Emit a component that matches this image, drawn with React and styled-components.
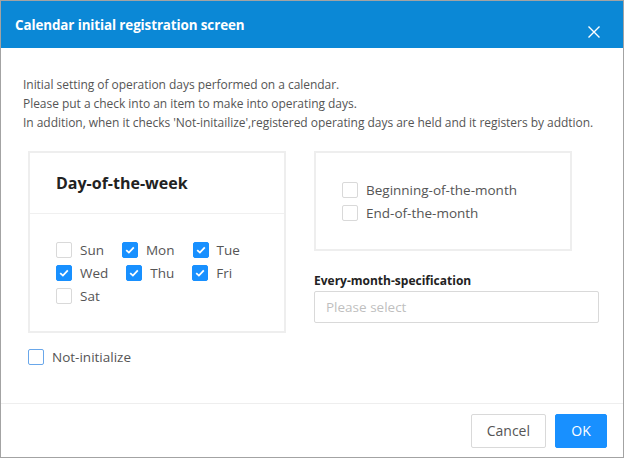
import React from 'react'
import styled, { createGlobalStyle } from 'styled-components'

const GlobalStyle = createGlobalStyle`
  html, body {
    margin: 0;
    padding: 0;
    background: #fff;
  }
  body {
    font-family: "Open Sans", "Noto Sans", sans-serif;
    color: #333;
  }
`

const Dialog = styled.div`
  box-sizing: border-box;
  width: 624px;
  height: 458px;
  border: 1px solid #a3a3a3;
  display: flex;
  flex-direction: column;
  background: #fff;
`

const Header = styled.div`
  height: 47px;
  background: #0b88d6;
  color: #fff;
  display: flex;
  align-items: center;
  justify-content: space-between;
  padding: 0 22px 0 14px;
  box-sizing: border-box;
`

const Title = styled.h1`
  margin: 0;
  font-size: 13.4px;
  font-weight: 700;
  letter-spacing: -0.1px;
`

const CloseButton = styled.button`
  background: none;
  border: 0;
  padding: 0;
  width: 14px;
  height: 14px;
  display: flex;
  align-items: center;
  justify-content: center;
  cursor: pointer;
  margin-top: 14px;
`

const Body = styled.div`
  flex: 1;
  padding: 27px 20px 0 22px;
`

const Intro = styled.p`
  margin: 0;
  font-size: 12px;
  letter-spacing: -0.04px;
  line-height: 19px;
  color: #555;
`

const Columns = styled.div`
  display: flex;
  gap: 28px;
  margin-top: 19px;
  padding-left: 5px;
`

const LeftColumn = styled.div`
  width: 258px;
`

const RightColumn = styled.div`
  width: 285px;
`

const Card = styled.div`
  box-sizing: border-box;
  border: 2px solid #eeeeee;
  width: 258px;
  height: ${p => p.$height};
`

const CardHeader = styled.div`
  height: 60px;
  border-bottom: 1px solid #f0f0f0;
  display: flex;
  align-items: center;
  padding-left: 26px;
  font-size: 16px;
  font-weight: 700;
  color: #222;
`

const CardBody = styled.div`
  padding: ${p => p.$padding};
  display: flex;
  flex-wrap: wrap;
  flex-direction: ${p => (p.$column ? 'column' : 'row')};
  row-gap: 7px;
`

const Option = styled.label`
  display: inline-flex;
  align-items: center;
  height: 16px;
  margin-right: 18px;
  font-size: 13.5px;
  color: #555;
  cursor: pointer;
`

const Box = styled.span`
  box-sizing: border-box;
  width: 16px;
  height: 16px;
  border-radius: 2px;
  border: 1px solid ${p => (p.$checked ? '#1890ff' : p.$accent ? '#69a7ea' : '#d9d9d9')};
  background: ${p => (p.$checked ? '#1890ff' : '#fff')};
  display: inline-flex;
  align-items: center;
  justify-content: center;
  margin-right: 8px;
  flex: none;
`

const NotInit = styled.div`
  margin-top: 15px;
`

const FieldLabel = styled.div`
  margin-top: 22px;
  font-size: 12px;
  font-weight: 700;
  color: #222;
  line-height: 16px;
`

const Select = styled.div`
  box-sizing: border-box;
  margin-top: 2px;
  height: 32px;
  border: 1px solid #d9d9d9;
  border-radius: 2px;
  display: flex;
  align-items: center;
  padding-left: 11px;
  font-size: 13.5px;
  color: #bfbfbf;
`

const Footer = styled.div`
  border-top: 1px solid #eeeeee;
  height: 54px;
  box-sizing: border-box;
  display: flex;
  align-items: center;
  justify-content: flex-end;
  gap: 9px;
  padding: 0 16px 0 0;
`

const Button = styled.button`
  box-sizing: border-box;
  height: 34px;
  padding: 0 15px;
  font-family: inherit;
  font-size: 14px;
  border-radius: 2px;
  border: 1px solid ${p => (p.$primary ? '#1890ff' : '#d9d9d9')};
  background: ${p => (p.$primary ? '#1890ff' : '#fff')};
  color: ${p => (p.$primary ? '#fff' : '#555')};
  min-width: ${p => (p.$primary ? '52px' : '75px')};
  cursor: pointer;
`

const Check = () => (
  <svg width="10" height="8" viewBox="0 0 10 8">
    <path d="M1.2 4.1 L3.9 6.6 L8.8 1.4" fill="none" stroke="#fff" strokeWidth="1.8" />
  </svg>
)

const CheckOption = ({ label, checked, accent }) => (
  <Option>
    <Box $checked={checked} $accent={accent}>{checked && <Check />}</Box>
    {label}
  </Option>
)

const days = [
  { label: 'Sun', checked: false },
  { label: 'Mon', checked: true },
  { label: 'Tue', checked: true },
  { label: 'Wed', checked: true },
  { label: 'Thu', checked: true },
  { label: 'Fri', checked: true },
  { label: 'Sat', checked: false },
]

export default function App() {
  return (
    <>
      <GlobalStyle />
      <Dialog>
        <Header>
          <Title>Calendar initial registration screen</Title>
          <CloseButton aria-label="close">
            <svg width="12" height="12" viewBox="0 0 12 12">
              <path d="M0.5 0.5 L11.5 11.5 M11.5 0.5 L0.5 11.5" stroke="#fff" strokeWidth="1.4" fill="none" />
            </svg>
          </CloseButton>
        </Header>
        <Body>
          <Intro>Initial setting of operation days performed on a calendar.</Intro>
          <Intro>Please put a check into an item to make into operating days.</Intro>
          <Intro>
            In addition, when it checks 'Not-initailize',registered operating days are held and it registers by addtion.
          </Intro>
          <Columns>
            <LeftColumn>
              <Card $height="182px">
                <CardHeader>Day-of-the-week</CardHeader>
                <CardBody $padding="28px 20px 0 26px">
                  {days.map(d => (
                    <CheckOption key={d.label} label={d.label} checked={d.checked} />
                  ))}
                </CardBody>
              </Card>
              <NotInit>
                <CheckOption label="Not-initialize" accent />
              </NotInit>
            </LeftColumn>
            <RightColumn>
              <Card $height="100px">
                <CardBody $column $padding="29px 20px 0 26px">
                  <CheckOption label="Beginning-of-the-month" />
                  <CheckOption label="End-of-the-month" />
                </CardBody>
              </Card>
              <FieldLabel>Every-month-specification</FieldLabel>
              <Select>Please select</Select>
            </RightColumn>
          </Columns>
        </Body>
        <Footer>
          <Button>Cancel</Button>
          <Button $primary>OK</Button>
        </Footer>
      </Dialog>
    </>
  )
}
